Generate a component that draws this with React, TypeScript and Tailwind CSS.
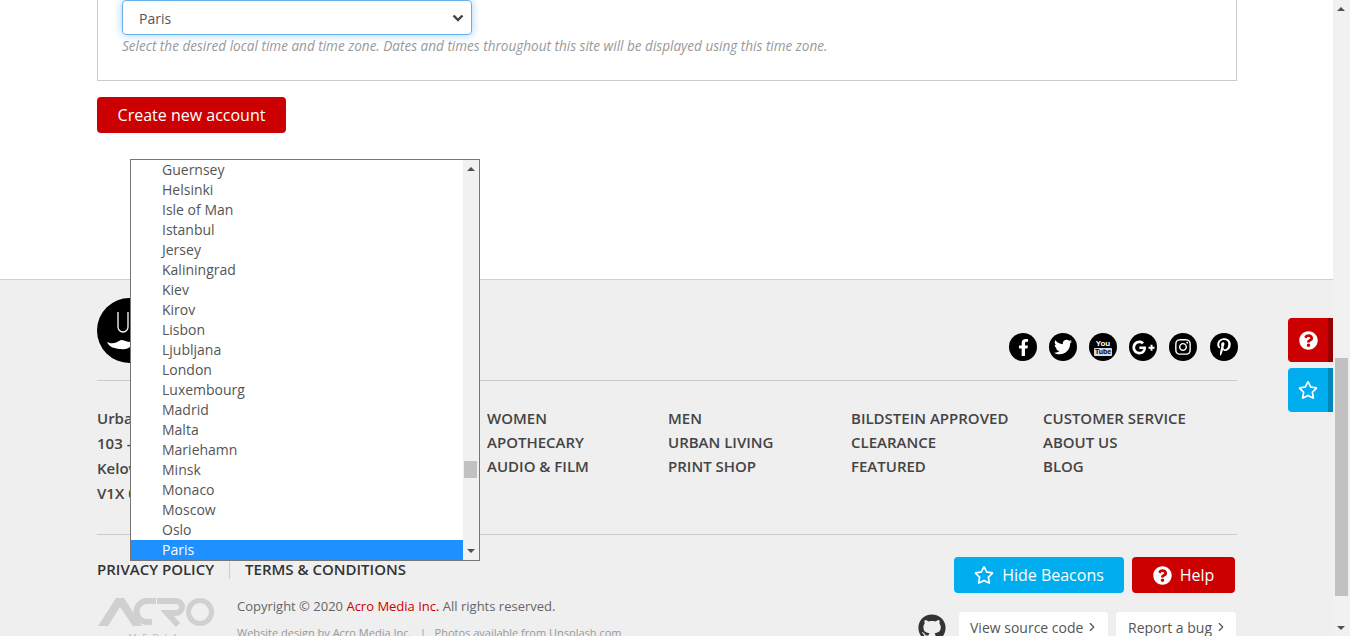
import { ChevronRight } from "lucide-react";
import {
  FaFacebookF,
  FaTwitter,
  FaGooglePlusG,
  FaInstagram,
  FaPinterestP,
  FaGithub,
  FaQuestionCircle,
  FaRegStar,
} from "react-icons/fa";

const cities = [
  "Guernsey",
  "Helsinki",
  "Isle of Man",
  "Istanbul",
  "Jersey",
  "Kaliningrad",
  "Kiev",
  "Kirov",
  "Lisbon",
  "Ljubljana",
  "London",
  "Luxembourg",
  "Madrid",
  "Malta",
  "Mariehamn",
  "Minsk",
  "Monaco",
  "Moscow",
  "Oslo",
  "Paris",
];

const menus = [
  { width: "w-[181px]", links: ["WOMEN", "APOTHECARY", "AUDIO & FILM"] },
  { width: "w-[183px]", links: ["MEN", "URBAN LIVING", "PRINT SHOP"] },
  { width: "w-[192px]", links: ["BILDSTEIN APPROVED", "CLEARANCE", "FEATURED"] },
  { width: "w-[190px]", links: ["CUSTOMER SERVICE", "ABOUT US", "BLOG"] },
];

function Social({ children }: { children: React.ReactNode }) {
  return (
    <span className="flex h-7 w-7 items-center justify-center overflow-hidden rounded-full bg-black text-white last:ml-px">
      {children}
    </span>
  );
}

function CityList() {
  return (
    <div className="absolute left-[130px] top-[159px] z-20 flex h-[402px] w-[350px] border border-[#767676] bg-white text-[14px] leading-[20px] text-[#555]">
      <ul className="w-[332px] overflow-hidden">
        {cities.map((city) => (
          <li
            key={city}
            className={
              city === "Paris" ? "h-5 bg-[#1e90ff] pl-[31px] text-white" : "h-5 pl-[31px]"
            }
          >
            {city}
          </li>
        ))}
      </ul>
      <div className="relative w-4 flex-1 bg-[#f1f1f1]">
        <span className="absolute left-[4px] top-[7px] h-0 w-0 border-x-[4px] border-b-[4px] border-x-transparent border-b-[#505050]" />
        <span className="absolute left-[1px] top-[301px] h-[17px] w-[13px] bg-[#c1c1c1]" />
        <span className="absolute bottom-[7px] left-[4px] h-0 w-0 border-x-[4px] border-t-[4px] border-x-transparent border-t-[#505050]" />
      </div>
    </div>
  );
}

function Footer() {
  return (
    <footer className="h-[357px] overflow-hidden border-t border-[#cfcfcf] bg-[#efefef]">
      <div className="ml-[97px] w-[1140px]">
        <div className="flex h-[101px] items-start justify-between border-b border-[#ccc] pt-[18px]">
          <svg viewBox="0 0 65 65" className="h-[65px] w-[65px]">
            <circle cx="32.500" cy="32.500" r="32.500" fill="#000" />
            <path d="M21 14v15a5 5 0 0 0 10 0V14" fill="none" stroke="#fff" strokeWidth="1.300" />
            <path d="M10 44c6 3 10 0 14-2 4 0 8 4 14 1-3 6-8 9-14 8-6 0-12-2-14-7z" fill="#fff" />
          </svg>
          <div className="-mr-px mt-[35px] flex gap-3">
            <Social>
              <FaFacebookF size={17} />
            </Social>
            <Social>
              <FaTwitter size={18} />
            </Social>
            <Social>
              <span className="flex flex-col items-center font-['Liberation_Sans',sans-serif] text-[7px] font-bold leading-[8px]">
                <span className="text-[8px] leading-[9px]">You</span>
                <span className="rounded-[1px] bg-[#d8d8e8] px-px text-black">Tube</span>
              </span>
            </Social>
            <Social>
              <FaGooglePlusG size={23} />
            </Social>
            <Social>
              <FaInstagram size={18} />
            </Social>
            <Social>
              <FaPinterestP size={18} />
            </Social>
          </div>
        </div>
        <div className="flex h-[154px] border-b border-[#ccc] pt-[25px] text-[15px] font-semibold text-[#444]">
          <div className="w-[390px] leading-[25px]">
            <p>Urban Hipster</p>
            <p>103 - 1630 Pandosy</p>
            <p>Kelowna, BC</p>
            <p>V1X 0C9</p>
          </div>
          {menus.map((menu) => (
            <ul key={menu.links[0]} className={`${menu.width} leading-[24px]`}>
              {menu.links.map((link) => (
                <li key={link}>{link}</li>
              ))}
            </ul>
          ))}
        </div>
        <div className="flex items-start justify-between">
          <div>
            <div className="mt-6 flex items-center text-[15px] font-semibold leading-[20px] text-[#333]">
              <span className="border-r border-[#ccc] pr-[15px]">PRIVACY POLICY</span>
              <span className="pl-[15px]">TERMS &amp; CONDITIONS</span>
            </div>
            <div className="mt-[17px] flex gap-[22px]">
              <div className="flex w-[118px] flex-col items-center">
                <svg viewBox="0 0 118 31" className="h-[31px] w-[118px] text-[#d0d0d0]" fill="currentColor">
                  <path d="M1 30 19 2h8l18 28h-9L23 11 11 30z" />
                  <path d="M59 5H50a10.500 10.500 0 0 0 0 21h5" fill="none" stroke="currentColor" strokeWidth="6" />
                  <path d="M60 5h19a6 6 0 0 1 0 12H70l11 12" fill="none" stroke="currentColor" strokeWidth="6" />
                  <circle cx="103" cy="16" r="11.500" fill="none" stroke="currentColor" strokeWidth="5" />
                </svg>
                <span className="mt-[5px] text-[9px] leading-[12px] tracking-[0.6em] text-[#bbb]">MEDIA</span>
              </div>
              <div className="text-[13px] text-[#666]">
                <p className="leading-[20px]">
                  Copyright © 2020 <span className="text-[#c00]">Acro Media Inc.</span> All rights reserved.
                </p>
                <p className="mt-[10px] text-[11px] leading-[14px] text-[#999]">
                  Website design by Acro Media Inc. &nbsp; | &nbsp; Photos available from Unsplash.com
                </p>
              </div>
            </div>
          </div>
          <div className="mt-[22px] flex flex-col items-end pr-[1px]">
            <div className="flex gap-2 pr-px text-[16px] text-white">
              <button className="flex h-9 w-[170px] items-center justify-center gap-2 rounded bg-[#00aeef]">
                <FaRegStar size={20} /> Hide Beacons
              </button>
              <button className="flex h-9 w-[103px] items-center justify-center gap-2 rounded bg-[#c00]">
                <FaQuestionCircle size={19} /> Help
              </button>
            </div>
            <div className="mt-[19px] flex items-center gap-2 text-[14px] text-[#555]">
              <FaGithub size={28} className="mr-[5px] text-[#333]" />
              <span className="flex h-8 w-[149px] items-center gap-0.5 rounded bg-white pb-0.5 pl-[11px]">
                View source code <ChevronRight size={14} />
              </span>
              <span className="flex h-8 w-[120px] items-center gap-0.5 rounded bg-white pb-0.5 pl-3">
                Report a bug <ChevronRight size={14} />
              </span>
            </div>
          </div>
        </div>
      </div>
    </footer>
  );
}

export default function App() {
  return (
    <div className="relative flex h-[636px] overflow-hidden font-['Open_Sans',sans-serif]">
      <div className="w-[1333px] bg-white">
        <div className="h-[279px]">
          <div className="ml-[97px] h-[81px] w-[1140px] border border-t-0 border-[#ccc] pl-6">
            <div className="flex h-[35px] w-[350px] items-center justify-between rounded border border-[#66afe9] pl-4 pr-[7px] pt-0.5 text-[14px] text-[#555] shadow-[0_0_8px_rgba(102,175,233,0.6)]">
              Paris
              <svg viewBox="0 0 12 8" className="h-2 w-3 text-[#444]" fill="none" stroke="currentColor" strokeWidth="2.400">
                <path d="m1.500 0.500 4.500 4.500 4.500-4.500" />
              </svg>
            </div>
            <p className="mt-px text-[13.560px] italic leading-[20px] text-[#999]">
              Select the desired local time and time zone. Dates and times throughout this site will be displayed using this time zone.
            </p>
          </div>
          <button className="ml-[97px] mt-4 h-9 w-[189px] rounded bg-[#c00] text-[16px] text-white">
            Create new account
          </button>
        </div>
        <Footer />
      </div>
      <CityList />
      <div className="absolute left-[1288px] top-[318px] z-10 flex w-[45px] flex-col gap-1.5">
        <span className="flex h-11 items-center justify-center rounded-l border-r-[5px] border-[#990000] bg-[#c00] text-white">
          <FaQuestionCircle size={19} />
        </span>
        <span className="flex h-11 items-center justify-center rounded-l border-r-[5px] border-[#0086b8] bg-[#00aeef] text-white">
          <FaRegStar size={20} />
        </span>
      </div>
      <div className="relative w-[17px] bg-[#f1f1f1]">
        <span className="absolute left-1 top-[7px] h-0 w-0 border-x-[4px] border-b-[4px] border-x-transparent border-b-[#505050]" />
        <span className="absolute left-[2px] top-[358px] h-[238px] w-[13px] bg-[#c1c1c1]" />
        <span className="absolute bottom-[6px] left-1 h-0 w-0 border-x-[4px] border-t-[4px] border-x-transparent border-t-[#505050]" />
      </div>
    </div>
  );
}
